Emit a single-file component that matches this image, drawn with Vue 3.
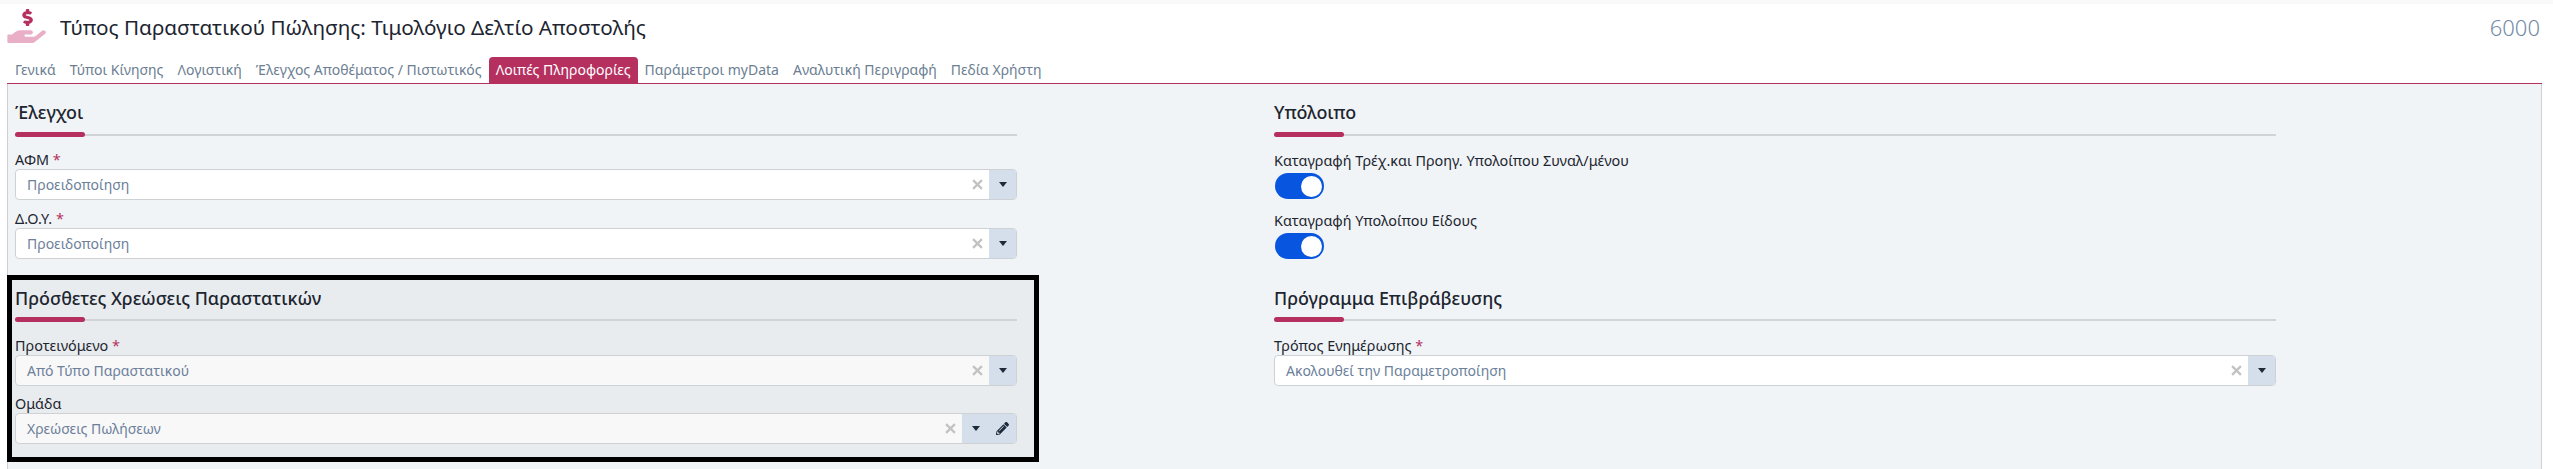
<script setup>
const tabs = ['Γενικά','Τύποι Κίνησης','Λογιστική','Έλεγχος Αποθέματος / Πιστωτικός','Λοιπές Πληροφορίες','Παράμετροι myData','Αναλυτική Περιγραφή','Πεδία Χρήστη']
</script>

<template>
  <div class="page">
    <header class="head">
      <svg class="logo" viewBox="0 0 576 512">
        <path fill="#b5305f" d="M271.06,144.3l54.27,14.3a8.59,8.59,0,0,1,6.63,8.1c0,4.6-4.09,8.4-9.12,8.4h-35.6a30,30,0,0,1-11.19-2.2c-5.24-2.2-11.28-1.7-15.3,2l-19,17.5a11.68,11.68,0,0,0-2.25,2.66,11.42,11.42,0,0,0,3.88,15.74,83.77,83.77,0,0,0,34.51,11.5V240c0,8.8,7.83,16,17.37,16h17.37c9.55,0,17.38-7.2,17.38-16V222.4c32.93-3.6,57.84-31,53.5-63-3.15-23-22.46-41.3-46.56-47.7L282.68,97.4a8.59,8.59,0,0,1-6.63-8.1c0-4.6,4.09-8.4,9.12-8.4h35.6A30,30,0,0,1,332,83.1c5.23,2.2,11.28,1.7,15.3-2l19-17.5A11.31,11.31,0,0,0,368.57,61a11.43,11.43,0,0,0-3.84-15.78,83.82,83.82,0,0,0-34.52-11.5V16c0-8.8-7.82-16-17.37-16H295.47c-9.54,0-17.37,7.2-17.37,16V33.6c-32.89,3.6-57.85,31-53.51,63C227.74,119.6,247.16,137.9,271.06,144.3Z"/>
        <path fill="#e8afc6" d="M565.27,328.1c-11.8-10.7-30.2-10-42.6,0L430.27,402a63.64,63.64,0,0,1-40,14H272a16,16,0,0,1,0-32h78.29c15.9,0,30.71-10.9,33.25-26.6a31.2,31.2,0,0,0,.46-5.46A32,32,0,0,0,352,320H192a117.66,117.66,0,0,0-74.1,26.29L71.4,384H16A16,16,0,0,0,0,400v96a16,16,0,0,0,16,16H372.77a64,64,0,0,0,40-14L564,377a32,32,0,0,0,1.28-48.9Z"/>
      </svg>
      <h1 class="title">Τύπος Παραστατικού Πώλησης: Τιμολόγιο Δελτίο Αποστολής</h1>
      <span class="code">6000</span>
    </header>

    <nav class="tabs">
      <a v-for="t in tabs" :key="t" class="tab" :class="{ active: t === 'Λοιπές Πληροφορίες' }">{{ t }}</a>
    </nav>

    <main class="panel">
      <div class="col">
        <section class="sec top">
          <h2 class="sec-title">Έλεγχοι</h2>
          <div class="rule"></div>
          <div class="field first">
            <label>ΑΦΜ <i>*</i></label>
            <div class="select">
              <span class="val">Προειδοποίηση</span>
              <svg class="x" viewBox="0 0 10 10"><path d="M1 1L9 9M9 1L1 9"/></svg>
              <span class="addon"><span class="cell"><b class="caret"></b></span></span>
            </div>
          </div>
          <div class="field">
            <label>Δ.Ο.Υ. <i>*</i></label>
            <div class="select">
              <span class="val">Προειδοποίηση</span>
              <svg class="x" viewBox="0 0 10 10"><path d="M1 1L9 9M9 1L1 9"/></svg>
              <span class="addon"><span class="cell"><b class="caret"></b></span></span>
            </div>
          </div>
        </section>

        <section class="sec boxed">
          <h2 class="sec-title">Πρόσθετες Χρεώσεις Παραστατικών</h2>
          <div class="rule"></div>
          <div class="field first">
            <label>Προτεινόμενο <i>*</i></label>
            <div class="select soft">
              <span class="val">Από Τύπο Παραστατικού</span>
              <svg class="x" viewBox="0 0 10 10"><path d="M1 1L9 9M9 1L1 9"/></svg>
              <span class="addon"><span class="cell"><b class="caret"></b></span></span>
            </div>
          </div>
          <div class="field">
            <label>Ομάδα</label>
            <div class="select soft">
              <span class="val">Χρεώσεις Πωλήσεων</span>
              <svg class="x" viewBox="0 0 10 10"><path d="M1 1L9 9M9 1L1 9"/></svg>
              <span class="addon">
                <span class="cell"><b class="caret"></b></span>
                <span class="cell">
                  <svg class="pen" viewBox="0 0 512 512"><path fill="#1c2a3a" d="M497.9 142.1l-46.1 46.1c-4.7 4.7-12.3 4.7-17 0l-111-111c-4.7-4.7-4.7-12.3 0-17l46.1-46.1c18.7-18.7 49.1-18.7 67.9 0l60.1 60.1c18.8 18.7 18.8 49.1 0 67.9zM284.2 99.8L21.6 362.4.4 483.9c-2.9 16.4 11.4 30.6 27.8 27.8l121.5-21.3 262.6-262.6c4.7-4.7 4.7-12.3 0-17l-111-111c-4.8-4.7-12.4-4.7-17.1 0zM124.1 339.9c-5.5-5.5-5.5-14.3 0-19.8l154-154c5.5-5.5 14.3-5.5 19.8 0s5.5 14.3 0 19.8l-154 154c-5.5 5.5-14.3 5.5-19.8 0zM88 424h48v36.3l-64.5 11.3-31.1-31.1L51.7 376H88v48z"/></svg>
                </span>
              </span>
            </div>
          </div>
        </section>
      </div>

      <div class="col">
        <section class="sec top">
          <h2 class="sec-title">Υπόλοιπο</h2>
          <div class="rule"></div>
          <div class="field first tog">
            <label>Καταγραφή Τρέχ.και Προηγ. Υπολοίπου Συναλ/μένου</label>
            <div class="toggle"><b></b></div>
          </div>
          <div class="field tog">
            <label>Καταγραφή Υπολοίπου Είδους</label>
            <div class="toggle"><b></b></div>
          </div>
        </section>
        <section class="sec lower">
          <h2 class="sec-title">Πρόγραμμα Επιβράβευσης</h2>
          <div class="rule"></div>
          <div class="field first">
            <label>Τρόπος Ενημέρωσης <i>*</i></label>
            <div class="select">
              <span class="val">Ακολουθεί την Παραμετροποίηση</span>
              <svg class="x" viewBox="0 0 10 10"><path d="M1 1L9 9M9 1L1 9"/></svg>
              <span class="addon"><span class="cell"><b class="caret"></b></span></span>
            </div>
          </div>
        </section>
      </div>
    </main>
  </div>
</template>

<style>
html, body { margin: 0; background: #fff; }
</style>

<style scoped>
.page {
  width: 2553px;
  height: 469px;
  overflow: hidden;
  box-sizing: border-box;
  font-family: "Noto Sans", sans-serif;
  color: #1c2530;
  background: #fff;
  display: flex;
  flex-direction: column;
  border-top: 4px solid #f9f9f9;
}
.head {
  height: 53px;
  display: flex;
  align-items: flex-start;
  padding: 5px 13px 0 7px;
  flex: none;
  box-sizing: border-box;
}
.logo { width: 39px; height: 34px; flex: none; }
.title {
  margin: 3px 0 0 14px;
  font-size: 20.7px;
  font-weight: 400;
  line-height: 30px;
  color: #1c2530;
}
.code {
  margin-left: auto;
  margin-top: 3px;
  font-size: 22px;
  line-height: 30px;
  font-weight: 300;
  color: #748ba5;
}
.tabs {
  flex: none;
  height: 27px;
  box-sizing: border-box;
  margin: 0 11px 0 7px;
  padding-left: 1px;
  display: flex;
  align-items: stretch;
  border-bottom: 1px solid #b5305f;
}
.tab {
  padding: 0 7px;
  font-size: 14px;
  line-height: 26px;
  color: #6b7e92;
  border-radius: 4px 4px 0 0;
}
.tab.active { background: #b5305f; color: #fff; }

.panel {
  flex: 1;
  margin: 0 11px 0 7px;
  background: #f1f4f6;
  border-left: 1px solid #d0d0d0;
  border-right: 1px solid #d0d0d0;
  display: grid;
  grid-template-columns: 1002px 1002px;
  column-gap: 257px;
  padding: 0 0 0 7px;
  align-content: start;
}
.sec-title {
  margin: 0;
  font-size: 17.9px;
  line-height: 24px;
  font-weight: 500;
  color: #1c2530;
}
.sec.top { padding-top: 16px; }
.top .rule { margin-top: 10px; }
.rule {
  height: 2px;
  margin-top: 9px;
  background: #d2d3d6;
  position: relative;
}
.rule::before {
  content: "";
  position: absolute;
  left: 0;
  top: -2px;
  width: 70px;
  height: 5px;
  border-radius: 3px;
  background: #b5305f;
}
.field { margin-top: 9px; }
.top .field { margin-top: 10px; }
.field.first { margin-top: 16px; }
.top .field.first { margin-top: 15px; }
.field label {
  display: block;
  font-size: 14.4px;
  line-height: 18px;
  color: #1c2530;
}
.field label i { font-style: normal; color: #b5305f; }
.select {
  height: 31px;
  box-sizing: border-box;
  border: 1px solid #cfd2d5;
  border-radius: 4px;
  background: #fff;
  display: flex;
  align-items: center;
  overflow: hidden;
}
.select.soft { background: #f8f8f8; }
.val {
  flex: 1;
  padding-left: 11px;
  font-size: 14px;
  color: #6c7f9b;
}
.x {
  width: 11px;
  height: 11px;
  margin-right: 6px;
  fill: none;
  stroke: #c2c2c2;
  stroke-width: 2;
}
.addon {
  align-self: stretch;
  display: flex;
  background: #d5dfec;
}
.cell {
  width: 27px;
  display: flex;
  align-items: center;
  justify-content: center;
}
.caret {
  width: 0;
  height: 0;
  border-left: 4px solid transparent;
  border-right: 4px solid transparent;
  border-top: 5px solid #1c2a3a;
}
.pen { width: 13px; height: 13px; }

.boxed {
  margin: 16px -22px 0 -8px;
  padding: 6px 17px 13px 3px;
  border: 5px solid #000;
  background: #e9ecee;
}
.lower { padding-top: 27px; }
.top .field.tog { margin-top: 13px; }
.top .field.first.tog { margin-top: 16px; }
.toggle {
  width: 49px;
  height: 26px;
  margin: 3px 0 0 1px;
  border-radius: 13px;
  background: #0856e0;
  display: flex;
  align-items: center;
  justify-content: flex-end;
  padding-right: 2px;
  box-sizing: border-box;
}
.toggle b { width: 21px; height: 21px; border-radius: 50%; background: #fff; }
</style>
